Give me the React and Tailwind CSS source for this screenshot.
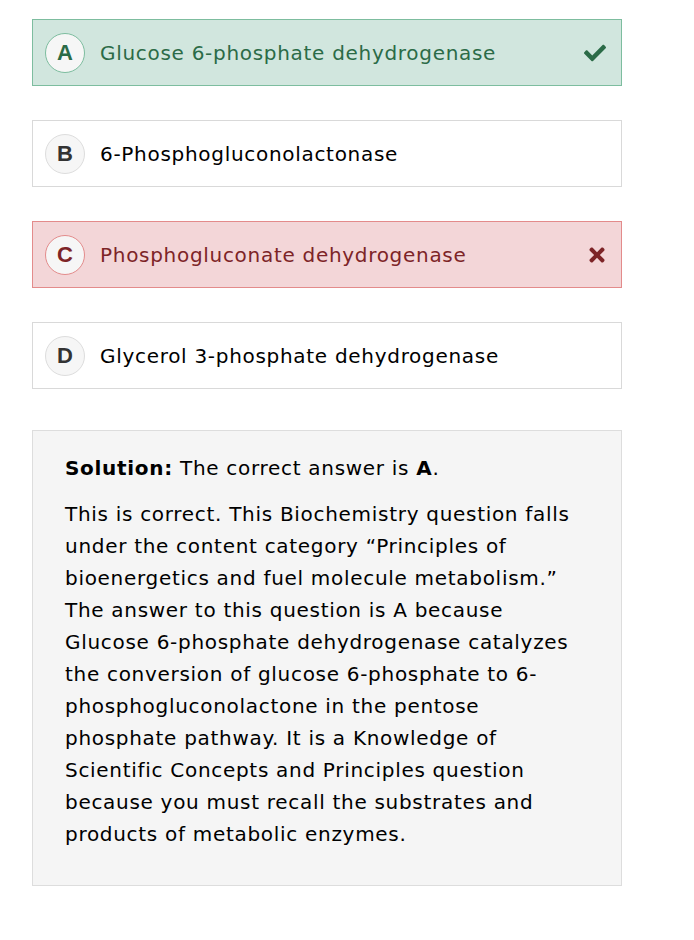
import { FaCheck, FaTimes } from "react-icons/fa";

const options = [
  { letter: "A", text: "Glucose 6-phosphate dehydrogenase", state: "correct" },
  { letter: "B", text: "6-Phosphogluconolactonase", state: "none" },
  { letter: "C", text: "Phosphogluconate dehydrogenase", state: "wrong" },
  { letter: "D", text: "Glycerol 3-phosphate dehydrogenase", state: "none" },
];

function Option({ letter, text, state }) {
  let box = "bg-white border-[#d9d9d9] text-black";
  let circle = "border-[#dddddd] text-[#333333]";
  if (state === "correct") {
    box = "bg-[#d1e6de] border-[#7dbd9f] text-[#2b6b47]";
    circle = "border-[#7dbd9f] text-[#2b6b47]";
  } else if (state === "wrong") {
    box = "bg-[#f3d6d8] border-[#e38b8b] text-[#7d2427]";
    circle = "border-[#e38b8b] text-[#7d2427]";
  }

  return (
    <div className={`flex items-center h-[67px] border pl-3 pr-[15px] ${box}`}>
      <div
        className={`w-10 h-10 shrink-0 rounded-full border bg-[#f6f6f6] flex items-center justify-center text-[22px] font-bold ${circle}`}
        style={{ fontFamily: '"Liberation Sans", Arial, sans-serif' }}
      >
        {letter}
      </div>
      <span className="ml-[15px] text-[20px] tracking-[0.7px] flex-1">{text}</span>
      {state === "correct" && <FaCheck className="w-[22px] h-[22px]" />}
      {state === "wrong" && <FaTimes className="w-[18px] h-[22px]" />}
    </div>
  );
}

export default function App() {
  return (
    <div
      className="w-[694px] min-h-[940px] bg-white pt-[19px] px-8"
      style={{ fontFamily: '"DejaVu Sans", Verdana, sans-serif' }}
    >
      <div className="w-[590px] flex flex-col gap-[34px]">
        {options.map((o) => (
          <Option key={o.letter} {...o} />
        ))}
        <div className="mt-[7px] bg-[#f5f5f5] border border-[#dddddd] px-8 pt-[21px] pb-[35px] text-[20px] leading-[32px] tracking-[0.7px] text-black">
          <p>
            <strong>Solution:</strong> The correct answer is <strong>A</strong>.
          </p>
          <p className="mt-[14px]">
            This is correct. This Biochemistry question falls under the content
            category “Principles of bioenergetics and fuel molecule
            metabolism.” The answer to this question is A because Glucose
            6-phosphate dehydrogenase catalyzes the conversion of glucose
            6-phosphate to 6-phosphogluconolactone in the pentose phosphate
            pathway. It is a Knowledge of Scientific Concepts and Principles
            question because you must recall the substrates and products of
            metabolic enzymes.
          </p>
        </div>
      </div>
    </div>
  );
}
